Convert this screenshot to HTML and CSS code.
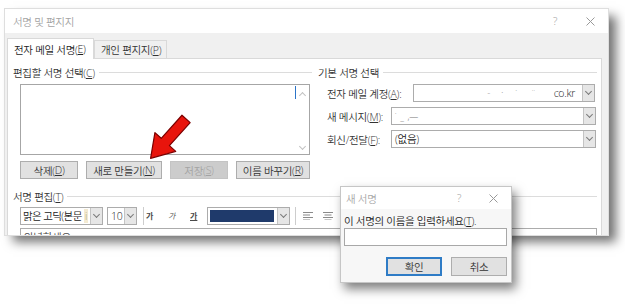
FILE: index.html
```html
<!DOCTYPE html>
<html>
	<head>
		<meta charset="UTF-8">
		<title>서명 및 편지지</title>
		<link rel="stylesheet" href="styles.css">
	</head>
	<body>
		<div class="page">
			<div class="dlg">
				<div class="titlebar">
					<span class="ttl">서명 및 편지지</span>
					<span class="tb-q">?</span>
					<svg class="tb-x" width="9" height="9" viewBox="0 0 9 9"><path d="M.5 .5 8.5 8.5M8.5 .5 .5 8.5" stroke="#9a9a9a" fill="none"/></svg>
				</div>
				<div class="tabs">
					<div class="tab on">전자 메일 서명(<u>E</u>)</div>
					<div class="tab">개인 편지지(<u>P</u>)</div>
				</div>
				<div class="panel">
					<div class="top">
						<!-- 편집할 서명 선택 -->
						<div class="grp">
							<div class="grp-h"><span>편집할 서명 선택(<u>C</u>)</span></div>
							<div class="list">
								<div class="caret"></div>
								<div class="scroll">
									<span class="chev up"></span>
									<span class="chev"></span>
								</div>
							</div>
							<div class="btns">
								<div class="btn w58">삭제(<u>D</u>)</div>
								<div class="btn w76">새로 만들기(<u>N</u>)</div>
								<div class="btn w58 off">저장(<u>S</u>)</div>
								<div class="btn w74">이름 바꾸기(<u>R</u>)</div>
							</div>
						</div>
						<!-- 기본 서명 선택 -->
						<div class="grp">
							<div class="grp-h"><span>기본 서명 선택</span></div>
							<div class="row">
								<span class="lbl l86">전자 메일 계정(<u>A</u>):</span>
								<div class="combo c182">
									<span class="val mail"><span class="mask">‐ &nbsp; &nbsp;ˑ &nbsp; &nbsp; &nbsp;˙ &nbsp; &nbsp; &nbsp; ¨</span>co.kr</span>
									<span class="dd"><span class="chev"></span></span>
								</div>
							</div>
							<div class="row">
								<span class="lbl l64">새 메시지(<u>M</u>):</span>
								<div class="combo c205">
									<span class="val"><span class="mask">˙ &nbsp;_ &nbsp;,—</span></span>
									<span class="dd"><span class="chev"></span></span>
								</div>
							</div>
							<div class="row">
								<span class="lbl l64">회신/전달(<u>F</u>):</span>
								<div class="combo c205">
									<span class="val">(없음)</span>
									<span class="dd"><span class="chev"></span></span>
								</div>
							</div>
						</div>
					</div>
					<!-- 서명 편집 -->
					<div class="grp-h edit-h"><span>서명 편집(<u>T</u>)</span></div>
					<div class="toolbar">
						<div class="combo c83">
							<span class="val tight">맑은 고딕(본문 <span class="hl">i</span></span>
							<span class="dd"><span class="chev"></span></span>
						</div>
						<div class="combo c30 ml4">
							<span class="val">10</span>
							<span class="dd"><span class="chev"></span></span>
						</div>
						<span class="sep"></span>
						<span class="fx b">가</span>
						<span class="fx i">가</span>
						<span class="fx u">가</span>
						<div class="combo c83 ml10">
							<span class="swatch"></span>
							<span class="dd"><span class="chev"></span></span>
						</div>
						<span class="sep sep2"></span>
						<svg class="al" width="10" height="8" viewBox="0 0 10 8"><path d="M0 .5H10M0 3H7M0 5.5H10M0 8H7" stroke="#8a8a8a" fill="none"/></svg>
						<svg class="al al2" width="10" height="8" viewBox="0 0 10 8"><path d="M0 .5H10M1.5 3H8.5M0 5.5H10M1.5 8H8.5" stroke="#8a8a8a" fill="none"/></svg>
					</div>
					<div class="editbox">안녕하세요</div>
				</div>
			</div>

			<svg class="arrow" width="56" height="56" viewBox="-28 -28 56 56">
				<polygon transform="rotate(132)" points="-27,-5.5 4,-5.5 4,-14 26,0 4,14 4,5.5 -27,5.5" fill="#e8140c" stroke="#7a0000" stroke-width="1.2" stroke-linejoin="round"/>
			</svg>

			<div class="newsig">
				<div class="ns-title">
					<span class="ttl">새 서명</span>
					<span class="tb-q">?</span>
					<svg class="tb-x" width="9" height="9" viewBox="0 0 9 9"><path d="M.5 .5 8.5 8.5M8.5 .5 .5 8.5" stroke="#9a9a9a" fill="none"/></svg>
				</div>
				<div class="ns-body">
					<div class="ns-lbl">이 서명의 이름을 입력하세요(<u>T</u>).</div>
					<div class="ns-input"></div>
					<div class="ns-btns">
						<div class="btn w56 def">확인</div>
						<div class="btn w56">취소</div>
					</div>
				</div>
			</div>
		</div>
	</body>
</html>
```

FILE: styles.css
```css
*{
	margin: 0;
	padding: 0;
	box-sizing: border-box;
}
body{
	background: #fff;
	font-family: "Open Sans", "Noto Sans CJK KR", sans-serif;
	font-size: 10.5px;
	font-weight: 350;
	letter-spacing: -0.3px;
	color: #2e2e2e;
}
u{
	text-decoration-thickness: 1px;
	text-underline-offset: 1px;
}
.page{
	position: relative;
	width: 625px;
	height: 304px;
	overflow: hidden;
	padding: 9px 0 0 5px;
}

/* 큰 대화상자 */
.dlg{
	width: 603px;
	height: 226px;
	background: #f0f0f0;
	box-shadow: 0 0 0 1px #dedede, 8px 7px 10px rgba(0,0,0,.55);
	overflow: hidden;
	display: flex;
	flex-direction: column;
}
.titlebar{
	height: 24px;
	flex: none;
	background: #fff;
	display: flex;
	align-items: center;
	padding: 0 13px 0 8px;
	color: #a3a3a3;
}
.tb-q{
	margin-left: auto;
	width: 10px;
	text-align: center;
	color: #9a9a9a;
}
.tb-x{
	margin-left: 26px;
}
.tabs{
	height: 25px;
	flex: none;
	display: flex;
	align-items: flex-end;
	padding-left: 2px;
}
.tab{
	height: 18px;
	width: 73px;
	display: flex;
	align-items: center;
	padding-left: 6px;
	border: 1px solid #d9d9d9;
	border-bottom: none;
	background: #f0f0f0;
	color: #333;
}
.tab.on{
	height: 21px;
	width: 87px;
	background: #fff;
	margin-bottom: -1px;
	position: relative;
	z-index: 1;
	color: #222;
}
.panel{
	flex: 1;
	width: 595px;
	margin-left: 2px;
	background: #fff;
	border: 1px solid #d9d9d9;
	border-bottom: none;
	padding: 6px 4px 0 5px;
}
.top{
	display: grid;
	grid-template-columns: 299px 279px;
	column-gap: 6px;
}
.grp-h{
	height: 14px;
	display: flex;
	align-items: center;
	gap: 4px;
	white-space: nowrap;
	color: #333;
}
.grp-h::after{
	content: "";
	flex: 1;
	height: 1px;
	background: #dcdcdc;
}
.list{
	margin: 5px 0 0 7px;
	width: 290px;
	height: 71px;
	border: 1px solid #a6a6a6;
	display: flex;
	justify-content: flex-end;
}
.caret{
	width: 1px;
	height: 13px;
	margin-top: 1px;
	background: #2b74c8;
}
.scroll{
	width: 13px;
	display: flex;
	flex-direction: column;
	justify-content: space-between;
	align-items: center;
	padding: 6px 0 5px;
}
.chev{
	width: 5px;
	height: 5px;
	border-right: 1px solid #7a7a7a;
	border-bottom: 1px solid #7a7a7a;
	transform: rotate(45deg);
	margin-top: -3px;
}
.scroll .chev{
	border-color: #c2c2c2;
}
.chev.up{
	transform: rotate(-135deg);
	margin-top: 2px;
}
.btns{
	display: flex;
	gap: 8px;
	margin: 6px 0 0 7px;
}
.btn{
	height: 18px;
	display: flex;
	align-items: center;
	justify-content: center;
	background: #e1e1e1;
	border: 1px solid #adadad;
	color: #333;
}
.w58{ width: 58px; }
.w76{ width: 76px; }
.w74{ width: 74px; }
.w56{ width: 56px; height: 19px; }
.btn.off{
	background: #cccccc;
	border-color: #c4c4c4;
	color: #a3a3a3;
}
.row{
	display: flex;
	align-items: center;
	height: 18px;
	margin-top: 5px;
	padding-left: 9px;
}
.lbl{
	white-space: nowrap;
	color: #333;
}
.l86{ width: 86px; }
.l64{ width: 64px; }
.combo{
	height: 18px;
	display: flex;
	border: 1px solid #acacac;
	background: #fff;
}
.c182{ width: 182px; }
.c205{ width: 205px; }
.c83{ width: 83px; }
.c30{ width: 30px; }
.ml4{ margin-left: 4px; }
.ml10{ margin-left: 10px; }
.val{
	flex: 1;
	min-width: 0;
	padding-left: 3px;
	line-height: 16px;
	white-space: nowrap;
	overflow: hidden;
	color: #222;
}
.val.tight{
	letter-spacing: -0.6px;
	padding-left: 2px;
}
.val.mail{
	text-align: right;
	padding-right: 7px;
}
.mask{
	color: #777;
	margin-right: 18px;
	font-size: 9px;
}
.hl{
	background: #f3ead2;
	color: #b0a070;
	padding: 0 1px;
}
.dd{
	width: 12px;
	flex: none;
	background: #e6e6e6;
	border-left: 1px solid #c4c4c4;
	display: flex;
	align-items: center;
	justify-content: center;
}
.edit-h{
	margin-top: 10px;
}
.toolbar{
	height: 18px;
	margin: 4px 0 0 7px;
	display: flex;
	align-items: center;
}
.sep{
	width: 1px;
	height: 18px;
	background: #cdcdcd;
	margin-left: 6px;
}
.sep2{
	margin-left: 5px;
}
.fx{
	width: 7px;
	font-size: 8px;
	line-height: 10px;
	color: #4a4a4a;
	margin-left: 15px;
	letter-spacing: 0;
}
.fx.b{
	margin-left: 2px;
	font-weight: bold;
}
.fx.i{
	font-style: italic;
}
.fx.u{
	text-decoration: underline;
	font-weight: bold;
}
.swatch{
	flex: 1;
	margin: 2px 3px 2px 2px;
	background: #1f3a6b;
}
.al{
	margin-left: 7px;
}
.al2{
	margin-left: 10px;
}
.editbox{
	margin: 3px 0 0 7px;
	height: 40px;
	border: 1px solid #acacac;
	padding: 1px 3px;
	line-height: 14px;
	color: #444;
}

/* 빨간 화살표 */
.arrow{
	position: absolute;
	left: 140px;
	top: 111px;
}

/* 새 서명 대화상자 */
.newsig{
	position: absolute;
	left: 340px;
	top: 186px;
	width: 172px;
	height: 97px;
	background: #f7f7f7;
	border: 1px solid #c6c6c6;
	box-shadow: 4px 6px 10px rgba(0,0,0,.5);
}
.ns-title{
	height: 22px;
	background: #fff;
	display: flex;
	align-items: center;
	padding: 0 13px 0 5px;
	color: #a8a8a8;
}
.ns-title .tb-x{
	margin-left: 25px;
}
.ns-body{
	padding: 0 4px 0 3px;
}
.ns-lbl{
	margin-top: 5px;
	height: 14px;
	line-height: 14px;
	white-space: nowrap;
	color: #222;
}
.ns-input{
	width: 163px;
	height: 18px;
	background: #fff;
	border: 1px solid #a8a8a8;
}
.ns-btns{
	margin-top: 11px;
	display: flex;
	justify-content: flex-end;
	gap: 9px;
}
.btn.def{
	border-color: #2f7cc6;
	box-shadow: inset 0 0 0 1px #2f7cc6;
}
```
